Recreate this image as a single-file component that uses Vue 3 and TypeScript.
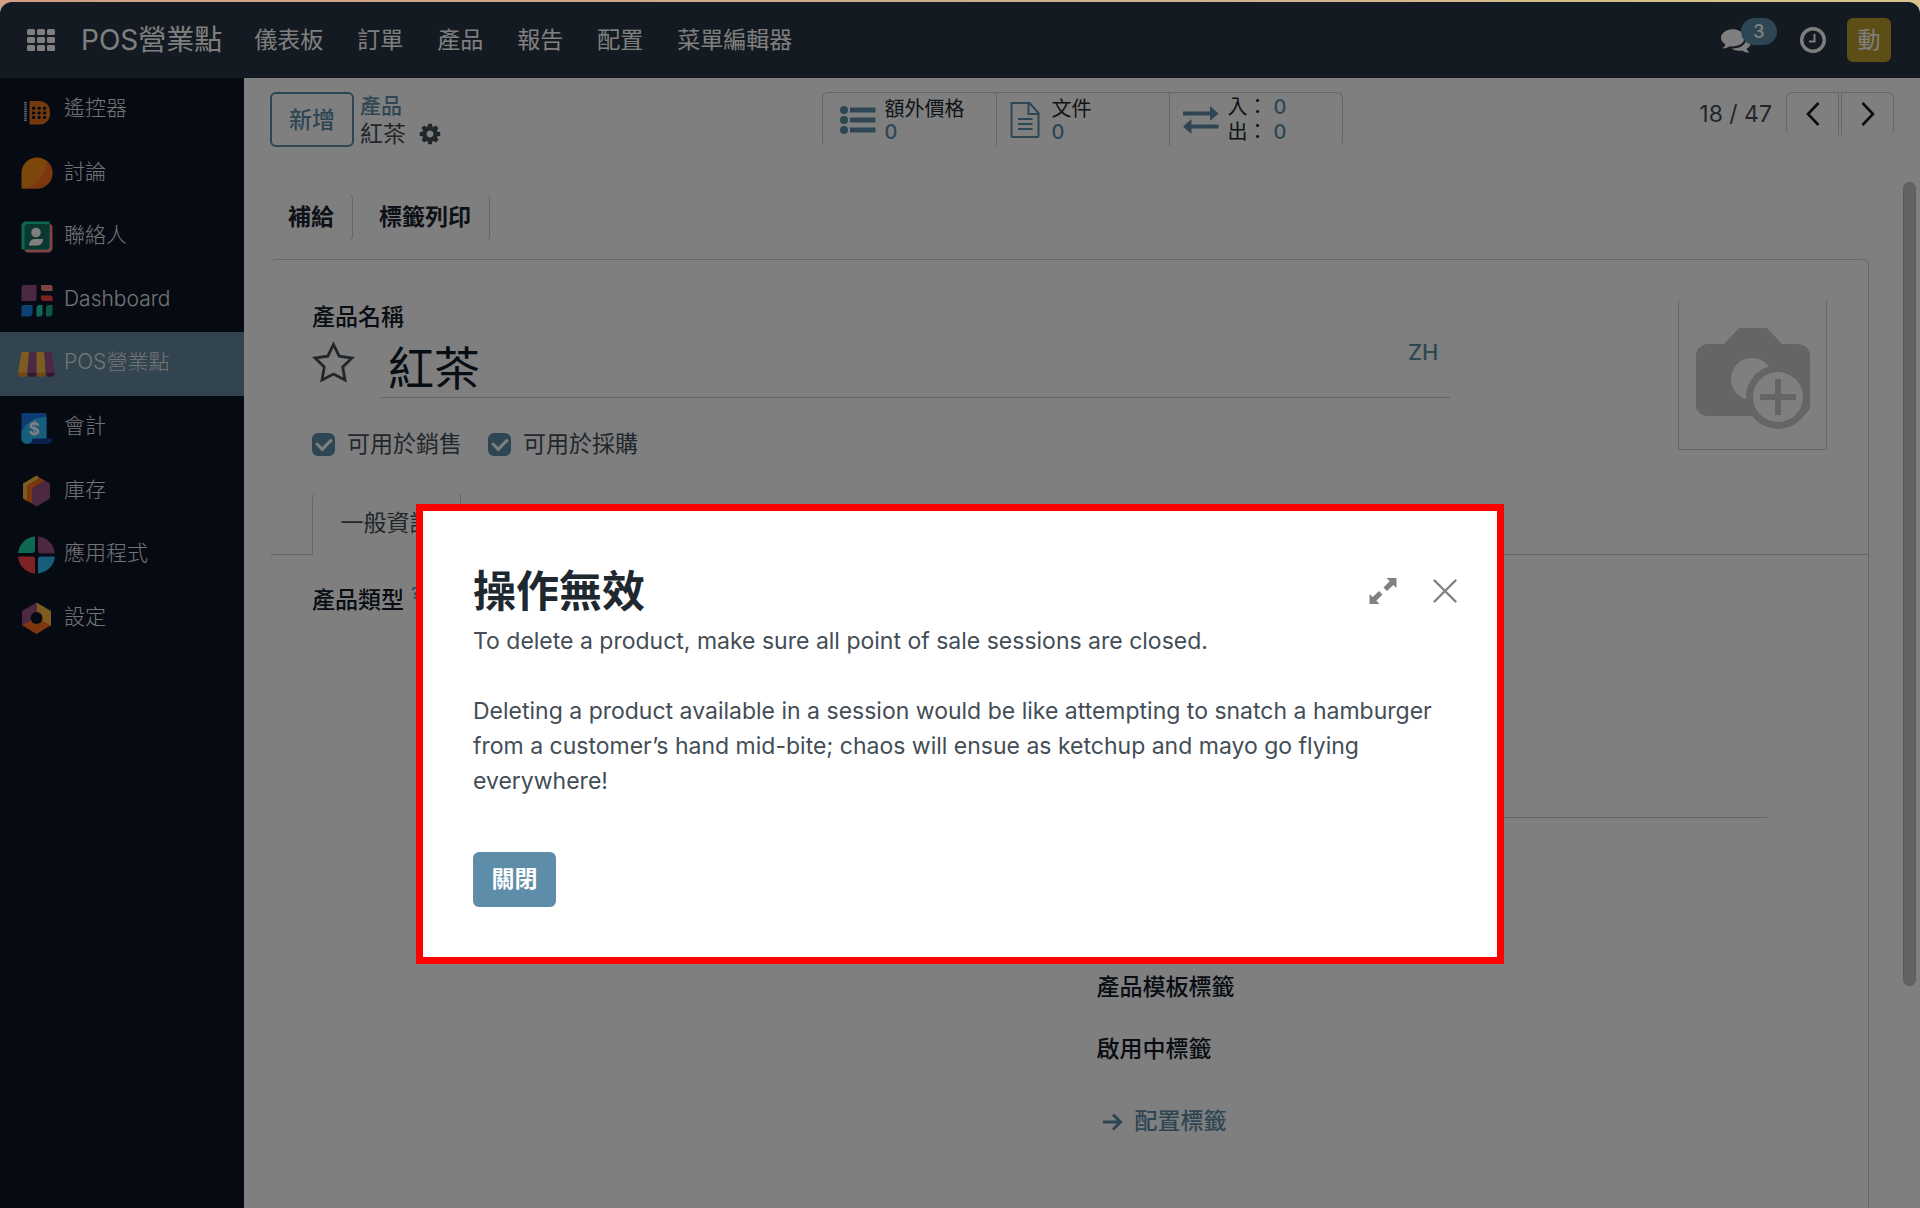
<script setup lang="ts">
import { ref } from 'vue'

interface AppEntry {
  id: string
  label: string
  active?: boolean
}

const menus: string[] = ['儀表板', '訂單', '產品', '報告', '配置', '菜單編輯器']

const apps: AppEntry[] = [
  { id: 'remote', label: '遙控器' },
  { id: 'discuss', label: '討論' },
  { id: 'contacts', label: '聯絡人' },
  { id: 'dashboard', label: 'Dashboard' },
  { id: 'pos', label: 'POS營業點', active: true },
  { id: 'accounting', label: '會計' },
  { id: 'inventory', label: '庫存' },
  { id: 'apps', label: '應用程式' },
  { id: 'settings', label: '設定' },
]

const productName = ref('紅茶')
const canSell = ref(true)
const canPurchase = ref(true)
</script>

<template>
  <div class="desktop">
    <div class="window">
      <header class="navbar">
        <button class="plain apps-toggle" aria-label="應用程式選單">
          <svg width="28" height="22" viewBox="0 0 28 22" fill="currentColor">
            <template v-for="r in 3" :key="r">
              <rect v-for="c in 3" :key="c" :x="(c - 1) * 10" :y="(r - 1) * 8" width="8" height="6" rx="1.5" />
            </template>
          </svg>
        </button>
        <a href="#" class="brand">POS營業點</a>
        <nav class="menus">
          <a v-for="menu in menus" :key="menu" href="#">{{ menu }}</a>
        </nav>
        <div class="systray">
          <button class="plain chat" aria-label="訊息">
            <svg width="30" height="30" viewBox="0 0 1792 1792" fill="currentColor">
              <path d="M1408 768q0 139-94 257t-256.500 186.500-353.500 68.500q-86 0-176-16-124 88-278 128-36 9-86 16h-3q-11 0-20.500-8t-11.500-21q-1-3-1-6.500t.5-6.500 2-6l2.500-5 3.500-5.500 4-5 4.500-5 4-4.500q5-6 23-25t26-29.500 22.500-29 25-38.500 20.500-44q-124-72-195-177t-71-224q0-139 94-257t256.500-186.500 353.500-68.500 353.500 68.500 256.500 186.500 94 257zm384 256q0 120-71 224.500t-195 176.500q10 24 20.500 44t25 38.500 22.500 29 26 29.500 23 25q1 1 4 4.500t4.500 5 4 5 3.500 5.500l2.500 5 2 6 .5 6.500-1 6.500q-3 14-13 22t-22 7q-50-7-86-16-154-40-278-128-90 16-176 16-271 0-472-132 58 4 88 4 161 0 309-45t264-129q125-92 192-212t67-254q0-77-23-152 129 71 204 178t75 230z" />
            </svg>
            <span class="badge">3</span>
          </button>
          <button class="plain" aria-label="活動">
            <svg width="26" height="26" viewBox="0 0 26 26" fill="none" stroke="currentColor">
              <circle cx="13" cy="13" r="11.300" stroke-width="3.400" />
              <path d="M14.500 7V14.500H9" stroke-width="2" />
            </svg>
          </button>
          <button class="avatar">動</button>
        </div>
      </header>

      <div class="body">
        <aside class="sidebar">
          <a v-for="app in apps" :key="app.id" href="#" class="app" :class="{ active: app.active }">
            <svg width="38" height="38" viewBox="0 0 38 38">
              <g v-if="app.id === 'remote'">
                <path d="M11.500 10H22a10 10 0 0 1 10 10v3.500a10 10 0 0 1-10 10H11.500z" fill="#e8731c" />
                <path d="M7.500 11V30" stroke="#cfd3d8" stroke-width="2.600" stroke-dasharray="1.400 .8" />
                <template v-for="r in 3" :key="r">
                  <rect v-for="c in 3" :key="c" :x="8.500 + c * 5.500" :y="11 + r * 4.700" width="3.200" height="3" rx=".8" fill="#0c1424" />
                </template>
              </g>
              <g v-else-if="app.id === 'discuss'">
                <path d="M3.500 34.500V19a15.500 15.500 0 1 1 15.500 15.500z" fill="#fb8c14" />
                <path d="M28 6.400A15.500 15.500 0 0 1 19 34.500H3.500C18 33 28 22 28 6.400z" fill="#f86f1e" />
              </g>
              <g v-else-if="app.id === 'contacts'">
                <path d="M31 6a3.500 3.500 0 0 1 3.500 3.500V30a4.500 4.500 0 0 1-4.500 4.500H9.500A3.500 3.500 0 0 1 6.500 31z" fill="#fc868b" />
                <path d="M3.500 31.500V8A4.500 4.500 0 0 1 8 3.500H31.500V28a3.500 3.500 0 0 1-3.500 3.500z" fill="#1ad3a5" />
                <path d="M6.500 31.500V9A3 3 0 0 1 9.500 6H31.500V28a3.500 3.500 0 0 1-3.500 3.500z" fill="#146e5e" />
                <circle cx="18" cy="14.500" r="4.800" fill="#fff" />
                <path d="M11 27.500c0-4 2.500-6.500 6-6.500h8c0 4-2.500 6.500-6 6.500z" fill="#fff" />
              </g>
              <g v-else-if="app.id === 'dashboard'">
                <path d="M5.500 4H18.500V17.500a2.500 2.500 0 0 1-2.500 2.500H3.500V6a2 2 0 0 1 2-2z" fill="#985184" />
                <path d="M23 4h9.500a2 2 0 0 1 2 2v4H26a3 3 0 0 1-3-3z" fill="#fc868b" />
                <path d="M23 14.500h9.500a2 2 0 0 1 2 2V20H26a3 3 0 0 1-3-3z" fill="#fc4448" />
                <path d="M5.500 24H14.500V32a3.500 3.500 0 0 1-3.500 3.500H3.500V26a2 2 0 0 1 2-2z" fill="#1a84e5" />
                <path d="M21.500 24h3v8.500a3 3 0 0 1-3 3h-3V27a3 3 0 0 1 3-3z" fill="#1ad3bb" />
                <path d="M31 24h3.500v8.500a3 3 0 0 1-3 3H28V27a3 3 0 0 1 3-3z" fill="#1aaa88" />
              </g>
              <g v-else-if="app.id === 'pos'">
                <path d="M0 27.500h9.400a4.700 4.500 0 0 1-9.400 0z" fill="#f88c1e" />
                <path d="M9.400 27.500h9.200a4.600 4.500 0 0 1-9.200 0z" fill="#6b2a56" />
                <path d="M18.600 27.500h9.200a4.600 4.500 0 0 1-9.200 0z" fill="#f88c1e" />
                <path d="M27.800 27.500H37a4.600 4.500 0 0 1-9.200 0z" fill="#6b2a56" />
                <path d="M3.500 7H11L9.400 27.500H0z" fill="#fbb945" />
                <path d="M11 7h7.600V27.500H9.400z" fill="#985184" />
                <path d="M18.600 7h7.600l1.600 20.500H18.600z" fill="#fbb945" />
                <path d="M26.200 7h6a1.500 1.500 0 0 1 1.500 1.300L37 27.500H27.800z" fill="#985184" />
              </g>
              <g v-else-if="app.id === 'accounting'">
                <path d="M3.500 4H26a2.500 2.500 0 0 1 2.500 2.500V30H3.500z" fill="#1a78e5" />
                <path d="M28.500 8V30L9 35A5.500 5.500 0 0 1 3.500 29.500V22A27 27 0 0 1 28.500 8z" fill="#2ebcfa" />
                <path d="M14.500 29.500H34.500a5.500 5.500 0 0 1-5.500 5.500H9a5.500 5.500 0 0 0 5.500-5.500z" fill="#144496" />
                <text x="16" y="25.500" text-anchor="middle" font-size="17" font-weight="700" fill="#fff">$</text>
              </g>
              <g v-else-if="app.id === 'inventory'">
                <path d="M5 11.500 18.500 3.500 22 6 9 14V29L5 26.500z" fill="#fbb945" />
                <path d="M9 14 22 6 27 8.500 14 16.500V31.500L9 29z" fill="#f86f1e" />
                <path d="M14 16.500 27 8.500 32 11.500V26.500L18.500 34.500 14 31.500z" fill="#985184" />
              </g>
              <g v-else-if="app.id === 'apps'">
                <path d="M17 .5V14a3 3 0 0 1-3 3H0A18.500 18.500 0 0 1 17 .5z" fill="#1ad3a5" />
                <path d="M20 .5A18.500 18.500 0 0 1 36.900 17.500H23a3 3 0 0 1-3-3z" fill="#985184" />
                <path d="M0 20.500H14a3 3 0 0 1 3 3V37.500A18.500 18.500 0 0 1 0 20.500z" fill="#fc4448" />
                <path d="M36.900 20.500A18.500 18.500 0 0 1 20 37.500V23.500a3 3 0 0 1 3-3z" fill="#2ebcfa" />
              </g>
              <g v-else>
                <path d="M18.500 3.500V19L5 27.500 4 26V12z" fill="#985184" />
                <path d="M18.500 3.500 33 12V26L32 27.500 18.500 19z" fill="#fbb945" />
                <path d="M4.500 26.500 18.500 18 32.500 26.500 18.500 35z" fill="#f86f1e" />
                <circle cx="18.500" cy="19" r="6" fill="#0c1424" />
              </g>
            </svg>
            <span>{{ app.label }}</span>
          </a>
        </aside>

        <main class="main">
          <div class="control-panel">
            <div class="crumbs">
              <button class="new">新增</button>
              <div class="trail">
                <a href="#">產品</a>
                <div class="current">
                  <span>紅茶</span>
                  <button class="plain" aria-label="動作">
                    <svg width="24" height="24" viewBox="0 0 1792 1792" fill="currentColor">
                      <path d="M1152 896q0-106-75-181t-181-75-181 75-75 181 75 181 181 75 181-75 75-181zm512-109v222q0 12-8 23t-20 13l-185 28q-19 54-39 91 35 50 107 138 10 12 10 25t-9 23q-27 37-99 108t-94 71q-12 0-26-9l-138-108q-44 23-91 38-16 136-29 186-7 28-36 28h-222q-14 0-24.500-8.500t-11.500-21.500l-28-184q-49-16-90-37l-141 107q-10 9-25 9-14 0-25-11-126-114-165-168-7-10-7-23 0-12 8-23 15-21 51-66.500t54-70.500q-27-50-41-99l-183-27q-13-2-21-12.500t-8-23.500v-222q0-12 8-23t19-13l186-28q14-46 39-92-40-57-107-138-10-12-10-24 0-10 9-23 26-36 98.500-107.500t94.500-71.500q13 0 26 10l138 107q44-23 91-38 16-136 29-186 7-28 36-28h222q14 0 24.500 8.500t11.500 21.500l28 184q49 16 90 37l142-107q9-9 24-9 13 0 25 10 129 119 165 170 7 8 7 22 0 12-8 23-15 21-51 66.500t-54 70.500q26 50 41 98l183 28q13 2 21 12.500t8 23.500z" />
                    </svg>
                  </button>
                </div>
              </div>
            </div>

            <div class="stats">
              <button class="stat">
                <svg width="36" height="30" viewBox="0 0 36 30" fill="currentColor">
                  <circle cx="4" cy="5" r="4" /><circle cx="4" cy="15" r="4" /><circle cx="4" cy="25" r="4" />
                  <path d="M10 2.500H35.500v5H10zM10 12.500H35.500v5H10zM10 22.500H35.500v5H10z" />
                </svg>
                <span class="stat-text"><span>額外價格</span><b>0</b></span>
              </button>
              <button class="stat">
                <svg width="33" height="36" viewBox="0 0 33 36" fill="none" stroke="currentColor" stroke-width="2" stroke-linejoin="round">
                  <path d="M1.500 1H19.500L28.500 11V34a1 1 0 0 1-1 1H2.500a1 1 0 0 1-1-1V2z" />
                  <path d="M18.500 1V12H28.500M8 17H22.500M8 22H22.500M8 27H22.500" />
                </svg>
                <span class="stat-text"><span>文件</span><b>0</b></span>
              </button>
              <button class="stat">
                <svg width="36" height="28" viewBox="0 0 36 28" fill="currentColor">
                  <path d="M0 5.500H27V0L35.500 7.500 27 15V9.500H0zM35.500 18.500H8.500V13L0 20.500 8.500 28V22.500H35.500z" />
                </svg>
                <span class="stat-text moves">
                  <span>入：<b>0</b></span>
                  <span>出：<b>0</b></span>
                </span>
              </button>
            </div>

            <div class="pager">
              <span>18 / 47</span>
              <div class="pager-buttons">
                <button aria-label="上一個">
                  <svg width="14" height="24" viewBox="0 0 14 24" fill="none" stroke="currentColor" stroke-width="2.600"><path d="M12.500 1 2 12 12.500 23" /></svg>
                </button>
                <button aria-label="下一個">
                  <svg width="14" height="24" viewBox="0 0 14 24" fill="none" stroke="currentColor" stroke-width="2.600"><path d="M1.500 1 12 12 1.500 23" /></svg>
                </button>
              </div>
            </div>
          </div>

          <div class="actions">
            <button>補給</button>
            <button>標籤列印</button>
          </div>

          <section class="sheet">
            <div class="head">
              <div class="title">
                <label for="product-name">產品名稱</label>
                <div class="name-row">
                  <button class="plain star" aria-label="收藏">
                    <svg width="43" height="42" viewBox="0 0 43 42" fill="none" stroke="currentColor" stroke-width="2.800">
                      <path d="M21.500 3.500 27.200 15.200 40 17 30.700 26 33 39 21.500 33 10 39 12.300 26 3 17 15.800 15.200z" />
                    </svg>
                  </button>
                  <div class="name-field">
                    <input id="product-name" v-model="productName" type="text" />
                    <button class="plain lang">ZH</button>
                  </div>
                </div>
                <div class="checks">
                  <label><input v-model="canSell" type="checkbox" />可用於銷售</label>
                  <label><input v-model="canPurchase" type="checkbox" />可用於採購</label>
                </div>
              </div>
              <button class="picture" aria-label="上傳圖片">
                <svg width="114" height="102" viewBox="0 0 114 102">
                  <path d="M12 16H28L43 0H71L86 16H102A12 12 0 0 1 114 28V80A12 12 0 0 1 102 88H12A12 12 0 0 1 0 80V28A12 12 0 0 1 12 16z" fill="#c9cbce" />
                  <circle cx="56" cy="51" r="21" fill="#fff" />
                  <circle cx="82" cy="69" r="32" fill="#c9cbce" />
                  <circle cx="82" cy="69" r="25" fill="#fff" />
                  <path d="M82 51V87M64 69H100" stroke="#c9cbce" stroke-width="6" />
                </svg>
              </button>
            </div>

            <div class="tabs">
              <button class="tab">一般資訊</button>
            </div>

            <div class="groups">
              <div class="group">
                <div class="field"><span class="label">產品類型<sup>?</sup></span></div>
              </div>
              <div class="group">
                <hr />
                <div class="field tags"><label for="template-tags">產品模板標籤</label><input id="template-tags" type="text" /></div>
                <div class="field tags"><label for="variant-tags">啟用中標籤</label><input id="variant-tags" type="text" /></div>
                <a href="#" class="configure">
                  <svg width="20" height="18" viewBox="0 0 20 18" fill="none" stroke="currentColor" stroke-width="3"><path d="M0 9H17M10 1.500 17.500 9 10 16.500" /></svg>
                  配置標籤
                </a>
              </div>
            </div>
          </section>
          <div class="scroll-thumb"></div>
        </main>
      </div>

      <div class="overlay">
        <div class="dialog" role="dialog" aria-modal="true" aria-labelledby="dialog-title">
          <header>
            <h1 id="dialog-title">操作無效</h1>
            <div class="tools">
              <button class="plain" aria-label="展開">
                <svg width="28" height="28" viewBox="0 0 28 28" fill="currentColor">
                  <path d="M17.500 1H27.500V11L24.300 8 18 14 14.500 10.500 20.700 4.300zM.5 17 3.700 20 10 14 13.500 17.500 7.300 23.700 10.500 27H.5z" />
                </svg>
              </button>
              <button class="plain" aria-label="關閉視窗">
                <svg width="24" height="24" viewBox="0 0 24 24" fill="none" stroke="currentColor" stroke-width="2.400" stroke-linecap="round"><path d="M1.500 1.500 22.500 22.500M22.500 1.500 1.500 22.500" /></svg>
              </button>
            </div>
          </header>
          <p>To delete a product, make sure all point of sale sessions are closed.</p>
          <p>Deleting a product available in a session would be like attempting to snatch a hamburger from a customer’s hand mid-bite; chaos will ensue as ketchup and mayo go flying everywhere!</p>
          <button class="primary">關閉</button>
        </div>
      </div>
    </div>
  </div>
</template>

<style>
body {
  margin: 0;
}
</style>

<style scoped>
* {
  box-sizing: border-box;
}

.desktop {
  display: flex;
  min-height: 100vh;
  padding-top: 2px;
  background: linear-gradient(90deg, #d39f86, #cfae8a 50%, #d8c58e);
  font-family: Inter, 'Noto Sans CJK TC', sans-serif;
  font-size: 23px;
  line-height: 35px;
  color: #434d56;
}

.window {
  position: relative;
  flex: 1;
  display: flex;
  flex-direction: column;
  overflow: hidden;
  border-radius: 12px 12px 0 0;
  background: #fff;
}

a {
  color: inherit;
  text-decoration: none;
}

button,
input {
  font: inherit;
  color: inherit;
  margin: 0;
}

button {
  padding: 0;
  border: 0;
  background: none;
}

svg {
  display: block;
  flex: none;
}

.plain {
  display: flex;
  align-items: center;
}

/* top bar */
.navbar {
  display: flex;
  align-items: center;
  height: 76px;
  padding: 0 29px 0 27px;
  background: #263442;
  color: #fff;
}

.apps-toggle {
  margin-right: 26px;
}

.brand {
  margin-right: 32px;
  font-size: 28px;
}

.menus {
  display: flex;
  gap: 34px;
  padding-top: 1px;
}

.systray {
  display: flex;
  align-items: center;
  margin-left: auto;
}

.chat {
  position: relative;
  margin-right: 49px;
}

.badge {
  position: absolute;
  left: 20px;
  top: -7px;
  width: 36px;
  height: 27px;
  border-radius: 14px;
  background: #5d8da8;
  font-size: 18px;
  font-weight: 500;
  line-height: 27px;
  text-align: center;
}

.avatar {
  width: 44px;
  height: 44px;
  margin-left: 21px;
  border-radius: 6px;
  background: #b99c28;
}

/* app list */
.body {
  flex: 1;
  display: flex;
  background: linear-gradient(90deg, #0c1424 244px, #fff 244px);
}

.sidebar {
  display: grid;
  grid-auto-rows: 1fr;
  width: 244px;
  height: 572px;
}

.app {
  display: flex;
  align-items: center;
  gap: 8px;
  padding-left: 18px;
  font-size: 21px;
  font-weight: 300;
  line-height: 32px;
  color: #e4e6ea;
}

.app span {
  padding-bottom: 3px;
}

.app.active {
  background: #64889f;
}

/* record page */
.main {
  position: relative;
  flex: 1;
  display: flex;
  flex-direction: column;
  padding: 14px 26px 0 26px;
}

.control-panel {
  display: grid;
  grid-template-columns: 1fr 521px 1fr;
  align-items: start;
}

.crumbs {
  display: flex;
  align-items: flex-start;
  gap: 6px;
}

.new {
  width: 84px;
  height: 55px;
  padding-top: 2px;
  border: 2px solid #5d8da8;
  border-radius: 6px;
  color: #5d8da8;
  font-weight: 500;
}

.trail {
  padding-top: 1px;
}

.trail a {
  display: block;
  font-size: 21px;
  font-weight: 500;
  line-height: 26px;
  color: #5d8da8;
}

.current {
  display: flex;
  align-items: center;
  gap: 12px;
  line-height: 30px;
}

.stats {
  display: grid;
  grid-template-columns: 1fr 1fr 1fr;
  height: 55px;
  border: 1px solid #c9cbce;
  border-bottom-color: #fafafa;
  border-radius: 6px;
}

.stat {
  display: flex;
  align-items: center;
  gap: 9px;
  padding-left: 13px;
  color: #5d8da8;
  font-size: 20px;
  line-height: 23px;
  text-align: left;
}

.stat:first-child {
  padding-left: 17px;
}

.stat + .stat {
  border-left: 1px solid #c9cbce;
}

.stat-text {
  display: flex;
  flex-direction: column;
  padding-top: 3px;
}

.stat-text span {
  color: #20282f;
}

.stat b {
  font-weight: 500;
  color: #5d8da8;
}

.stat-text.moves {
  padding-top: 1px;
  line-height: 25px;
}

.moves b {
  margin-left: 6px;
}

.pager {
  display: flex;
  justify-content: flex-end;
  align-items: center;
  gap: 14px;
}

.pager span {
  padding-top: 1px;
}

.pager-buttons {
  display: flex;
  gap: 2px;
}

.pager-buttons button {
  display: flex;
  align-items: center;
  justify-content: center;
  width: 53px;
  height: 43px;
  border: 1px solid #c9cbce;
  border-bottom: 0;
  color: #111827;
}

.pager-buttons button:first-child {
  border-radius: 6px 0 0 6px;
}

.pager-buttons button:last-child {
  border-radius: 0 6px 6px 0;
}

.actions {
  display: flex;
  margin-top: 44px;
}

.actions button {
  height: 49px;
  padding: 0 18px;
  border-right: 1px solid #c9cbce;
  border-radius: 6px;
  font-weight: 700;
  color: #1a2430;
}

.actions button + button {
  padding-left: 26px;
}

.sheet {
  flex: 1;
  margin: 17px 25px 0 0;
  border: 1px solid #c9cbce;
  border-left-color: #fafafa;
  border-bottom: 0;
  border-radius: 6px 6px 0 0;
}

.head {
  display: flex;
  justify-content: space-between;
  padding: 40px 41px 0 41px;
}

.title {
  flex: 1;
  max-width: 1138px;
}

.title > label,
.field label,
.label {
  font-weight: 500;
  color: #111827;
}

.title > label {
  display: block;
}

.name-row {
  display: flex;
  gap: 26px;
}

.star {
  align-self: flex-start;
  margin-top: 6px;
}

.name-field {
  flex: 1;
  display: flex;
  align-items: flex-start;
  border-bottom: 1px solid #c9cbce;
}

.name-field input {
  flex: 1;
  min-width: 0;
  height: 62px;
  padding: 0 0 3px 7px;
  border: 0;
  outline: 0;
  background: none;
  font-size: 46px;
  color: #111827;
}

.lang {
  width: 42px;
  font-size: 22px;
  font-weight: 500;
  color: #5d8da8;
}

.checks {
  display: flex;
  gap: 26px;
  margin-top: 29px;
}

.checks label {
  display: flex;
  align-items: center;
  gap: 12px;
}

.checks input {
  appearance: none;
  display: grid;
  place-items: center;
  width: 23px;
  height: 23px;
  border-radius: 6px;
  background: #5d8da8;
}

.checks input:checked::before {
  content: '';
  width: 7px;
  height: 12px;
  margin-bottom: 4px;
  border: solid #fff;
  border-width: 0 3px 3px 0;
  transform: rotate(45deg);
}

.picture {
  display: flex;
  align-items: center;
  justify-content: center;
  width: 149px;
  height: 150px;
  padding-top: 8px;
  border: 1px solid #c9cbce;
  border-top-color: #fafafa;
}

.tabs {
  display: flex;
  margin-top: 30px;
}

.tabs::before,
.tabs::after {
  content: '';
  width: 41px;
  border-bottom: 1px solid #c9cbce;
}

.tabs::after {
  flex: 1;
}

.tab {
  width: 149px;
  height: 63px;
  border-left: 1px solid #c9cbce;
  border-right: 1px solid #c9cbce;
  border-radius: 6px 6px 0 0;
}

.groups {
  display: grid;
  grid-template-columns: 1fr 1fr;
  gap: 54px;
  padding: 28px 41px 0 41px;
}

.label sup {
  margin-left: 7px;
  font-size: 16px;
  line-height: 16px;
  color: #3a9fc4;
}

.group hr {
  margin: 234px 60px 152px 0;
  border: 0;
  border-top: 1px solid #c9cbce;
}

.field {
  display: flex;
}

.tags {
  margin-bottom: 20px;
  height: 42px;
}

.tags label {
  width: 166px;
}

.tags input {
  flex: 1;
  border: 0;
  border-bottom: 1px solid #f8f8f9;
  background: none;
}

.configure {
  display: flex;
  align-items: center;
  gap: 12px;
  margin: 30px 0 0 6px;
  font-weight: 500;
  color: #5d8da8;
}

.scroll-thumb {
  position: absolute;
  right: 4px;
  top: 104px;
  width: 13px;
  height: 804px;
  border: 1px solid #b4b6ba;
  border-radius: 7px;
  background: #c2c4c8;
}

/* dialog */
.overlay {
  position: absolute;
  inset: 0;
  padding-top: 502px;
  background: rgba(0, 0, 0, 0.5);
}

.dialog {
  width: 1088px;
  margin: 0 auto;
  padding: 50px 40px 50px 50px;
  border: 7px solid #f00;
  background: #fff;
}

.dialog header {
  display: flex;
  align-items: center;
  justify-content: space-between;
  margin-bottom: 3px;
}

.dialog h1 {
  margin: 0;
  font-size: 43px;
  font-weight: 700;
  line-height: 60px;
  color: #20282f;
}

.tools {
  display: flex;
  gap: 36px;
  color: #808080;
}

.dialog p {
  margin: 0 0 35px;
}

.primary {
  width: 83px;
  height: 55px;
  margin-top: 18px;
  border-radius: 6px;
  background: #5d8da8;
  color: #fff;
  font-weight: 700;
}
</style>
